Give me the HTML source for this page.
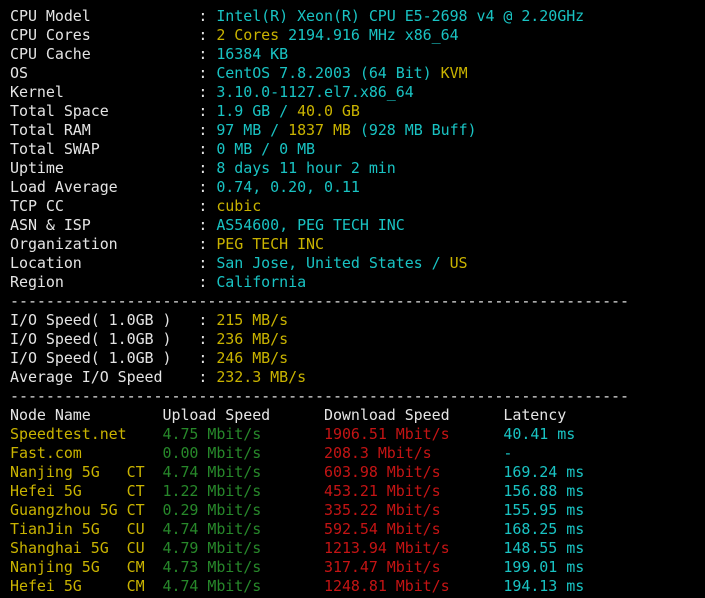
<html><head><style>
body{margin:0;background:#000;width:705px;height:598px;overflow:hidden}
pre{margin:0;padding:7px 0 0 10px;font-family:"DejaVu Sans Mono","Liberation Mono",monospace;font-size:15px;letter-spacing:-0.06px;line-height:19px;color:#e4e4e4}
.c{color:#19c3c3}.y{color:#c9b300}.g{color:#27882a}.r{color:#c41414}
</style></head><body><pre>CPU Model            : <span class="c">Intel(R) Xeon(R) CPU E5-2698 v4 @ 2.20GHz</span>
CPU Cores            : <span class="y">2 Cores</span> <span class="c">2194.916 MHz x86_64</span>
CPU Cache            : <span class="c">16384 KB</span>
OS                   : <span class="c">CentOS 7.8.2003 (64 Bit)</span> <span class="y">KVM</span>
Kernel               : <span class="c">3.10.0-1127.el7.x86_64</span>
Total Space          : <span class="c">1.9 GB / </span><span class="y">40.0 GB</span>
Total RAM            : <span class="c">97 MB / </span><span class="y">1837 MB</span> <span class="c">(928 MB Buff)</span>
Total SWAP           : <span class="c">0 MB / 0 MB</span>
Uptime               : <span class="c">8 days 11 hour 2 min</span>
Load Average         : <span class="c">0.74, 0.20, 0.11</span>
TCP CC               : <span class="y">cubic</span>
ASN &amp; ISP            : <span class="c">AS54600, PEG TECH INC</span>
Organization         : <span class="y">PEG TECH INC</span>
Location             : <span class="c">San Jose, United States / </span><span class="y">US</span>
Region               : <span class="c">California</span>
---------------------------------------------------------------------
I/O Speed( 1.0GB )   : <span class="y">215 MB/s</span>
I/O Speed( 1.0GB )   : <span class="y">236 MB/s</span>
I/O Speed( 1.0GB )   : <span class="y">246 MB/s</span>
Average I/O Speed    : <span class="y">232.3 MB/s</span>
---------------------------------------------------------------------
Node Name        Upload Speed      Download Speed      Latency
<span class="y">Speedtest.net    </span><span class="g">4.75 Mbit/s       </span><span class="r">1906.51 Mbit/s      </span><span class="c">40.41 ms</span>
<span class="y">Fast.com         </span><span class="g">0.00 Mbit/s       </span><span class="r">208.3 Mbit/s        </span><span class="c">-</span>
<span class="y">Nanjing 5G   CT  </span><span class="g">4.74 Mbit/s       </span><span class="r">603.98 Mbit/s       </span><span class="c">169.24 ms</span>
<span class="y">Hefei 5G     CT  </span><span class="g">1.22 Mbit/s       </span><span class="r">453.21 Mbit/s       </span><span class="c">156.88 ms</span>
<span class="y">Guangzhou 5G CT  </span><span class="g">0.29 Mbit/s       </span><span class="r">335.22 Mbit/s       </span><span class="c">155.95 ms</span>
<span class="y">TianJin 5G   CU  </span><span class="g">4.74 Mbit/s       </span><span class="r">592.54 Mbit/s       </span><span class="c">168.25 ms</span>
<span class="y">Shanghai 5G  CU  </span><span class="g">4.79 Mbit/s       </span><span class="r">1213.94 Mbit/s      </span><span class="c">148.55 ms</span>
<span class="y">Nanjing 5G   CM  </span><span class="g">4.73 Mbit/s       </span><span class="r">317.47 Mbit/s       </span><span class="c">199.01 ms</span>
<span class="y">Hefei 5G     CM  </span><span class="g">4.74 Mbit/s       </span><span class="r">1248.81 Mbit/s      </span><span class="c">194.13 ms</span></pre></body></html>
